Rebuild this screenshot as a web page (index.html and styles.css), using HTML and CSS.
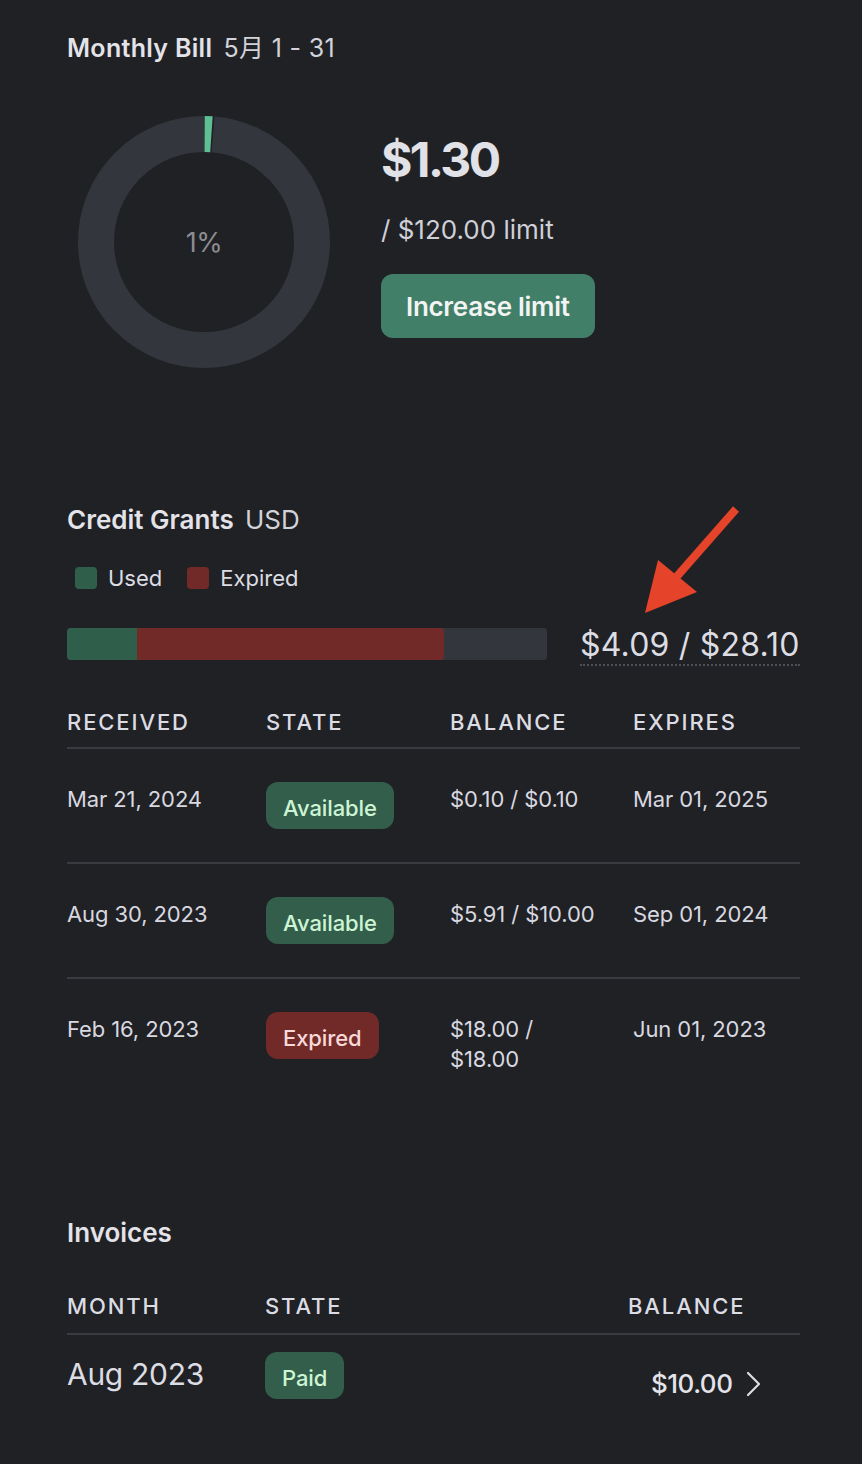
FILE: index.html
```html
<!DOCTYPE html>
<html lang="en">
<head>
<meta charset="utf-8">
<title>Billing</title>
<link rel="stylesheet" href="styles.css">
</head>
<body>
<main class="page">
  <h2 class="title"><strong>Monthly Bill</strong> <span class="sub">5月 1 - 31</span></h2>

  <section class="bill">
    <div class="donut">
      <svg width="252" height="252" viewBox="0 0 252 252">
        <g transform="rotate(-90 126 126)">
          <circle cx="126" cy="126" r="108" fill="none" stroke="#33363d" stroke-width="36" stroke-dasharray="669 700" stroke-dashoffset="-9.2"/>
          <circle cx="126" cy="126" r="108" fill="none" stroke="#5dbf93" stroke-width="36" stroke-dasharray="7 700" stroke-dashoffset="-0.6"/>
        </g>
      </svg>
      <span class="pct">1%</span>
    </div>
    <div class="bill-info">
      <div class="amount">$1.30</div>
      <div class="limit">/ $120.00 limit</div>
      <button class="btn">Increase limit</button>
    </div>
  </section>

  <h2 class="title grants-title"><strong>Credit Grants</strong> <span class="sub">USD</span></h2>
  <div class="legend">
    <span class="legend-item"><i class="sw sw-used"></i>Used</span>
    <span class="legend-item"><i class="sw sw-expired"></i>Expired</span>
  </div>
  <div class="bar-row">
    <div class="bar">
      <span class="seg seg-used" style="width:70px"></span>
      <span class="seg seg-expired" style="width:307px"></span>
    </div>
    <span class="total">$4.09 / $28.10</span>
  </div>

  <div class="table grants">
    <div class="row head">
      <div>Received</div><div>State</div><div>Balance</div><div>Expires</div>
    </div>
    <div class="row">
      <div class="cell">Mar 21, 2024</div>
      <div><span class="pill ok">Available</span></div>
      <div class="cell bal">$0.10 / $0.10</div>
      <div class="cell">Mar 01, 2025</div>
    </div>
    <div class="row">
      <div class="cell">Aug 30, 2023</div>
      <div><span class="pill ok">Available</span></div>
      <div class="cell bal">$5.91 / $10.00</div>
      <div class="cell">Sep 01, 2024</div>
    </div>
    <div class="row last">
      <div class="cell">Feb 16, 2023</div>
      <div><span class="pill bad">Expired</span></div>
      <div class="cell bal">$18.00 / $18.00</div>
      <div class="cell">Jun 01, 2023</div>
    </div>
  </div>

  <h2 class="title inv-title"><strong>Invoices</strong></h2>
  <div class="table invoices">
    <div class="row head">
      <div>Month</div><div>State</div><div>Balance</div>
    </div>
    <div class="row">
      <div class="cell month">Aug 2023</div>
      <div><span class="pill ok">Paid</span></div>
      <div class="cell inv-bal">$10.00
        <svg class="chev" width="16" height="26" viewBox="0 0 16 26"><path d="M2 2 L13 13 L2 24" fill="none" stroke="#dcdce3" stroke-width="2.2" stroke-linecap="round" stroke-linejoin="round"/></svg>
      </div>
    </div>
  </div>
</main>

<svg class="arrow" width="862" height="1464" viewBox="0 0 862 1464">
  <line x1="736" y1="509" x2="672" y2="582" stroke="#e5432a" stroke-width="8"/>
  <polygon points="645,613 658,560 697,592" fill="#e5432a"/>
</svg>
</body>
</html>
```

FILE: styles.css
```css
* { box-sizing: border-box; }
html, body { margin: 0; padding: 0; background: #202124; }
body {
  font-family: Inter, "Noto Sans CJK SC", "Noto Sans", sans-serif;
  color: #dcdce3;
  position: relative;
  min-height: 1464px;
}
.page { padding: 32px 62px 40px 67px; }

.title {
  margin: 0;
  font-size: 25px;
  line-height: 32px;
  font-weight: 400;
  color: #e3e3e9;
  letter-spacing: 0.3px;
}
.title strong { font-weight: 600; }
.title .sub { color: #d2d2da; margin-left: 4px; }

.bill { display: flex; margin-top: 52px; gap: 51px; padding-left: 11px; }
.donut { position: relative; width: 252px; height: 252px; }
.donut svg { display: block; }
.pct {
  position: absolute; inset: 0;
  display: flex; align-items: center; justify-content: center;
  font-size: 27px; color: #8c8c92; letter-spacing: -0.5px;
}
.bill-info { padding-top: 16px; }
.amount {
  font-size: 48px; line-height: 56px; font-weight: 700;
  color: #e1e1e8; letter-spacing: -2.6px;
}
.limit {
  margin-top: 25px;
  font-size: 26px; line-height: 34px; color: #cfcfd8; letter-spacing: 0;
}
.btn {
  margin-top: 27px;
  display: block;
  height: 64px;
  padding: 0 25px;
  border: 0; border-radius: 12px;
  background: #427f68;
  color: #f2f4f3;
  font-family: inherit;
  font-size: 26px; font-weight: 600; letter-spacing: -0.3px;
}

.grants-title { margin-top: 135px; font-size: 26px; line-height: 34px; letter-spacing: 0; }
.legend { display: flex; gap: 25px; margin-top: 26px; padding-left: 8px; }
.legend-item { display: flex; align-items: center; gap: 11px; font-size: 22px; line-height: 30px; color: #dcdce3; }
.sw { width: 22px; height: 22px; border-radius: 4px; display: block; }
.sw-used { background: #2f5e4b; }
.sw-expired { background: #722a28; }

.bar-row { display: flex; align-items: flex-start; gap: 33px; margin-top: 35px; }
.bar {
  display: flex; width: 480px; height: 32px;
  background: #33363d; border-radius: 4px; overflow: hidden;
}
.seg { display: block; height: 100%; }
.seg-used { background: #2f5e4b; }
.seg-expired { background: #722a28; border-radius: 0 4px 4px 0; }
.total {
  font-size: 32px; line-height: 36px; color: #dcdce3; letter-spacing: 0.2px;
  padding-bottom: 1px;
  border-bottom: 2px dotted #4d4f56;
  margin-top: -1px;
}

.table { margin-top: 41px; }
.row { display: grid; }
.grants .row { grid-template-columns: 199px 184px 183px 1fr; }
.invoices .row { grid-template-columns: 198px 363px 1fr; }
.row.head {
  font-size: 22px; line-height: 30px; font-weight: 500;
  text-transform: uppercase; letter-spacing: 1.9px;
  color: #dcdce4;
  padding-bottom: 10px;
  border-bottom: 2px solid #3a3b41;
}
.invoices .row.head { padding-bottom: 12px; }
.grants .row:not(.head) {
  padding: 33px 0;
  border-bottom: 2px solid #3a3b41;
  font-size: 22px; line-height: 30px; letter-spacing: -0.1px;
}
.grants .row.last { border-bottom: 0; }
.cell { padding-top: 2px; color: #d8d8e0; }
.bal { max-width: 150px; }
.pill {
  display: inline-flex; align-items: center;
  height: 47px; padding: 4px 17px 0;
  border-radius: 12px;
  font-size: 22px; font-weight: 500; letter-spacing: -0.1px;
}
.pill.ok { background: #335e4c; color: #cdf5d4; }
.pill.bad { background: #722a28; color: #f8d8d8; }

.inv-title { margin-top: 109px; font-size: 26px; line-height: 34px; letter-spacing: 0; }
.invoices { margin-top: 41px; }
.invoices .row:not(.head) { padding-top: 17px; align-items: start; }
.month { font-size: 30px; line-height: 40px; padding-top: 2px; color: #dcdce3; letter-spacing: -0.3px; }
.inv-bal {
  display: flex; align-items: center; gap: 14px;
  padding-left: 23px; padding-top: 12px;
  font-size: 26px; line-height: 40px; font-weight: 500; color: #e3e3e9; letter-spacing: -0.5px;
}
.chev { display: block; }

.arrow { position: absolute; top: 0; left: 0; pointer-events: none; }
```
